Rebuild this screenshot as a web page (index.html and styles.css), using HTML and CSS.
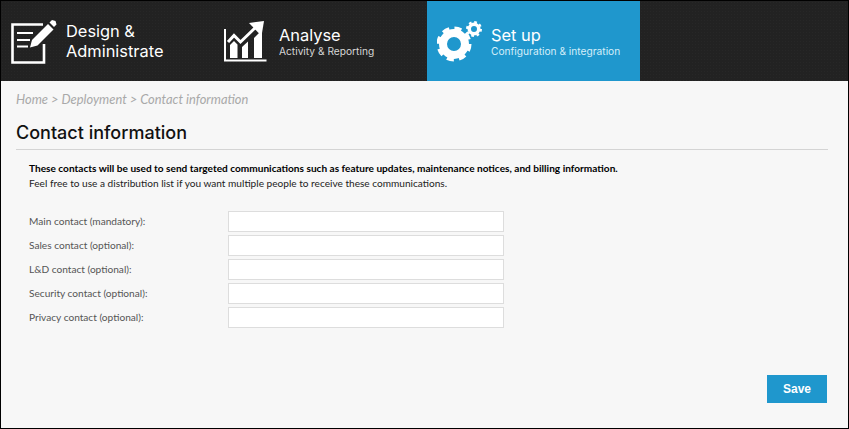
FILE: index.html
```html
<!DOCTYPE html>
<html lang="en">
<head>
  <meta charset="UTF-8" />
  <title>Contact information</title>
  <link rel="stylesheet" href="styles.css">
</head>
<body>
  <div class="frame">
    <header class="nav">
      <a class="tab">
        <svg class="tab-icon" viewBox="0 0 46 46" width="46" height="46">
          <path d="M32 6.500H1.500v38h31.500V26" fill="none" stroke="#fff" stroke-width="2.600"/>
          <path d="M6 15h16M6 22h13M6 28.500h11" stroke="#fff" stroke-width="2.200" fill="none"/>
          <path d="M19 29.500l2-7.500L37 6l5.500 5.500-16 16z" fill="#fff"/>
          <path d="M38.500 4.500l2.500-2.500 3.500 1 1 3.500-2.500 2.500z" fill="#fff"/>
        </svg>
        <span class="tab-title tab-title-double">Design &amp;<br>Administrate</span>
      </a>
      <a class="tab">
        <svg class="tab-icon" viewBox="0 0 46 46" width="46" height="46">
          <path d="M1 11v31.500h41.500" fill="none" stroke="#fff" stroke-width="2"/>
          <path d="M6 40V27l4-4 3.500 3.500V40zM18 40V29l6-5.500V40zM30 40V20l8-8v28z" fill="#fff"/>
          <path d="M4 24l6-6.500 6.500 6.500L32 9" fill="none" stroke="#fff" stroke-width="3"/>
          <path d="M25 5l15-2-2.500 15z" fill="#fff"/>
        </svg>
        <span class="tab-text">
          <span class="tab-title">Analyse</span>
          <span class="tab-sub">Activity &amp; Reporting</span>
        </span>
      </a>
      <a class="tab tab-active">
        <svg class="tab-icon" viewBox="0 0 46 46" width="46" height="46">
          <g fill="none" stroke="#fff">
            <circle cx="17" cy="26" r="11" stroke-width="8"/>
            <circle cx="17" cy="26" r="15.500" stroke-width="4" stroke-dasharray="7 5.170"/>
            <circle cx="37" cy="11" r="4.750" stroke-width="3.500"/>
            <circle cx="37" cy="11" r="7" stroke-width="2" stroke-dasharray="2.750 2.750"/>
          </g>
        </svg>
        <span class="tab-text">
          <span class="tab-title">Set up</span>
          <span class="tab-sub">Configuration &amp; integration</span>
        </span>
      </a>
    </header>

    <main class="content">
      <p class="breadcrumb">Home &gt; Deployment &gt; Contact information</p>
      <h1 class="page-title">Contact information</h1>
      <div class="intro">
        <p class="intro-strong">These contacts will be used to send targeted communications such as feature updates, maintenance notices, and billing information.</p>
        <p>Feel free to use a distribution list if you want multiple people to receive these communications.</p>
      </div>
      <form class="contact-form">
        <label class="row"><span class="row-label">Main contact (mandatory):</span><input class="field" type="text"></label>
        <label class="row"><span class="row-label">Sales contact (optional):</span><input class="field" type="text"></label>
        <label class="row"><span class="row-label">L&amp;D contact (optional):</span><input class="field" type="text"></label>
        <label class="row"><span class="row-label">Security contact (optional):</span><input class="field" type="text"></label>
        <label class="row"><span class="row-label">Privacy contact (optional):</span><input class="field" type="text"></label>
        <div class="actions"><button class="save" type="button">Save</button></div>
      </form>
    </main>
  </div>
</body>
</html>
```

FILE: styles.css
```css
* {
  box-sizing: border-box;
}

html, body {
  margin: 0;
  padding: 0;
  background-color: #000;
}

.frame {
  width: 849px;
  height: 429px;
  border: 1px solid #000;
  background-color: #f7f7f7;
  font-family: Lato, 'Liberation Sans', sans-serif;
  overflow: hidden;
}

.nav {
  display: flex;
  height: 80px;
  background-color: #222;
  background-image: radial-gradient(#272727 1px, transparent 1px);
  background-size: 3px 3px;
}

.tab {
  display: flex;
  align-items: center;
  width: 213px;
  padding-left: 10px;
  color: #fff;
}

.tab-active {
  background-color: #1f97cd;
}

.tab-icon {
  flex: none;
  margin-right: 9px;
}

.tab-active .tab-icon {
  margin-right: 8px;
}

.tab-text {
  display: flex;
  flex-direction: column;
}

.tab-title {
  font-family: Inter, Roboto, sans-serif;
  font-size: 16.400px;
  line-height: 20px;
}

.tab-sub {
  font-family: Inter, Roboto, sans-serif;
  font-size: 10.200px;
  line-height: 13px;
  color: #d6d6d6;
}

.tab-active .tab-sub {
  color: #d5eef9;
}

.content {
  padding: 0 20px 0 15px;
}

.breadcrumb {
  margin: 11px 0 0;
  font-size: 12.900px;
  line-height: 15px;
  font-style: italic;
  color: #a9a9a9;
}

.page-title {
  margin: 13px 0 0;
  padding-bottom: 4px;
  border-bottom: 1px solid #d4d4d4;
  font-family: Inter, Roboto, sans-serif;
  font-size: 18px;
  line-height: 25px;
  font-weight: 500;
  color: #111;
}

.intro {
  margin-top: 11px;
  padding-left: 13px;
  font-size: 10.100px;
  line-height: 15px;
  color: #222;
}

.intro p {
  margin: 0;
}

.intro-strong {
  font-weight: 700;
  color: #000;
}

.contact-form {
  margin-top: 18px;
}

.row {
  display: flex;
  align-items: center;
  height: 24px;
  padding-left: 13px;
  font-size: 10.150px;
  color: #555;
}

.row-label {
  width: 199px;
}

.field {
  width: 276px;
  height: 21px;
  border: 1px solid #ddd;
  background-color: #fff;
}

.actions {
  display: flex;
  justify-content: flex-end;
  margin-top: 46px;
  padding-right: 1px;
}

.save {
  width: 60px;
  height: 28px;
  border: none;
  background-color: #1f97cd;
  color: #fff;
  font-family: 'Liberation Sans', sans-serif;
  font-size: 12px;
  font-weight: 700;
}
```
